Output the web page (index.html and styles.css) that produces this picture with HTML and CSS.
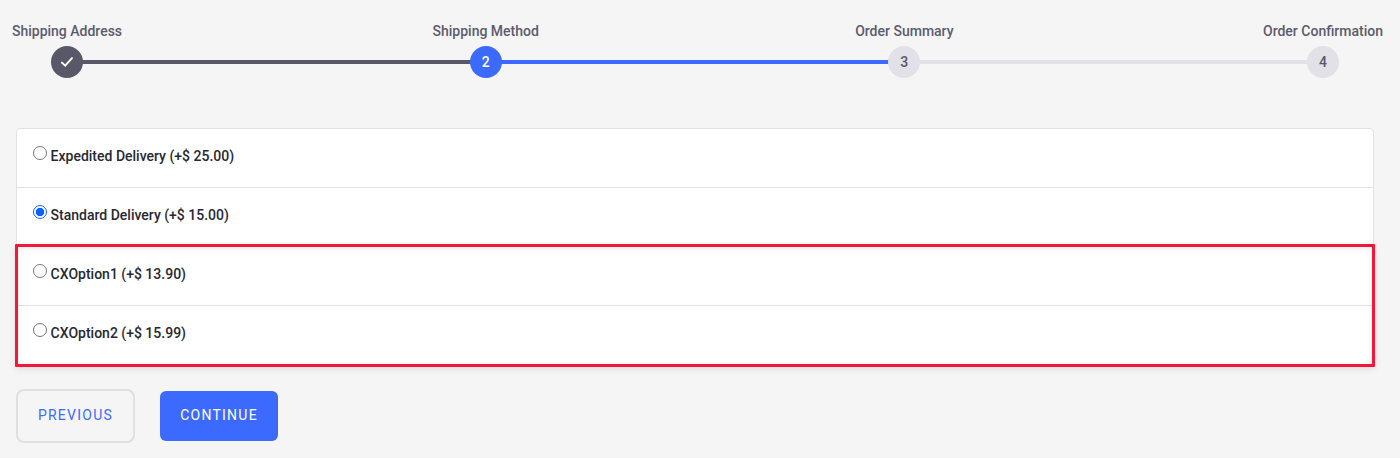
FILE: index.html
```html
<!DOCTYPE html>
<html lang="en">
<head>
<meta charset="utf-8">
<title>Shipping Method</title>
<link rel="stylesheet" href="styles.css">
</head>
<body>
<main class="checkout">
  <nav class="steps">
    <div class="step done"><span class="label">Shipping Address</span><span class="dot"><svg width="14" height="12" viewBox="0 0 14 12"><path d="M1.9 6.6 5.2 9.7 12 2.1" fill="none" stroke="#fff" stroke-width="1.9" stroke-linecap="round"/></svg></span></div>
    <span class="line line-done"></span>
    <div class="step current"><span class="label">Shipping Method</span><span class="dot">2</span></div>
    <span class="line line-current"></span>
    <div class="step"><span class="label">Order Summary</span><span class="dot">3</span></div>
    <span class="line"></span>
    <div class="step"><span class="label">Order Confirmation</span><span class="dot">4</span></div>
  </nav>
  <form class="methods">
    <label class="option"><input class="radio" type="radio" name="m"><span>Expedited Delivery (+$ 25.00)</span></label>
    <label class="option"><input class="radio" type="radio" name="m" checked><span>Standard Delivery (+$ 15.00)</span></label>
    <label class="option"><input class="radio" type="radio" name="m"><span>CXOption1 (+$ 13.90)</span></label>
    <label class="option"><input class="radio" type="radio" name="m"><span>CXOption2 (+$ 15.99)</span></label>
    <div class="highlight"></div>
  </form>
  <div class="actions">
    <button class="btn previous" type="button">PREVIOUS</button>
    <button class="btn continue" type="button">CONTINUE</button>
  </div>
</main>
</body>
</html>
```
FILE: styles.css
```css
* { box-sizing: border-box; }
body { margin: 0; background: #f5f5f5; font-family: Roboto, sans-serif; overflow: hidden; }
.checkout { height: 458px; padding: 21px 26px 0 16px; }
.steps { display: flex; align-items: flex-end; height: 57px; margin: 0 35px 50px; }
.step { width: 32px; height: 57px; flex: none; display: flex; flex-direction: column; align-items: center; justify-content: space-between; }
.label { white-space: nowrap; font-size: 14px; font-weight: 500; line-height: 20px; color: #5c5b6e; }
.dot { width: 32px; height: 32px; border-radius: 50%; background: #e1e1e7; color: #585869; display: flex; align-items: center; justify-content: center; font-size: 14px; font-weight: 500; }
.done .dot { background: #585869; }
.current .dot { background: #3c6aff; color: #fff; }
.line { flex: 1; height: 4px; margin: 0 -1px 14px; background: #e1e1e7; }
.line-done { background: #585869; }
.line-current { background: #3c6aff; }
.methods { position: relative; background: #fff; border: 1px solid #e1e1e6; border-radius: 4px; }
.option { display: flex; align-items: flex-start; gap: 3.6px; height: 59px; padding: 17px 16px; border-bottom: 1px solid #e1e1e6; font-size: 14px; font-weight: 500; line-height: 20px; letter-spacing: 0; color: #272833; }
.option:nth-of-type(4) { height: 58px; border-bottom: 0; }
.radio { appearance: none; flex: none; width: 14px; height: 14px; margin: 0; border: 1px solid #767676; border-radius: 50%; background: #fff; }
.radio:checked { border-color: #0b61ff; background: radial-gradient(circle, #0b61ff 3.8px, #fff 4.6px); }
.highlight { position: absolute; left: -2px; right: -2px; top: 115px; height: 123px; border: 3px solid #f5173a; border-radius: 1px; box-shadow: 0 2px 6px rgba(0,0,0,.1), inset 0 2px 6px rgba(0,0,0,.08); pointer-events: none; }
.actions { display: flex; align-items: center; gap: 25px; margin-top: 24px; }
.btn { font: 400 14px/20px Roboto, sans-serif; letter-spacing: 1.25px; padding: 0 0 2px; border-radius: 6px; }
.previous { width: 119px; height: 54px; border: 2px solid #e0e0e0; border-radius: 8px; background: transparent; color: #3c6aff; }
.continue { width: 118px; height: 50px; border: 0; background: #3c6aff; color: #fff; }
```
